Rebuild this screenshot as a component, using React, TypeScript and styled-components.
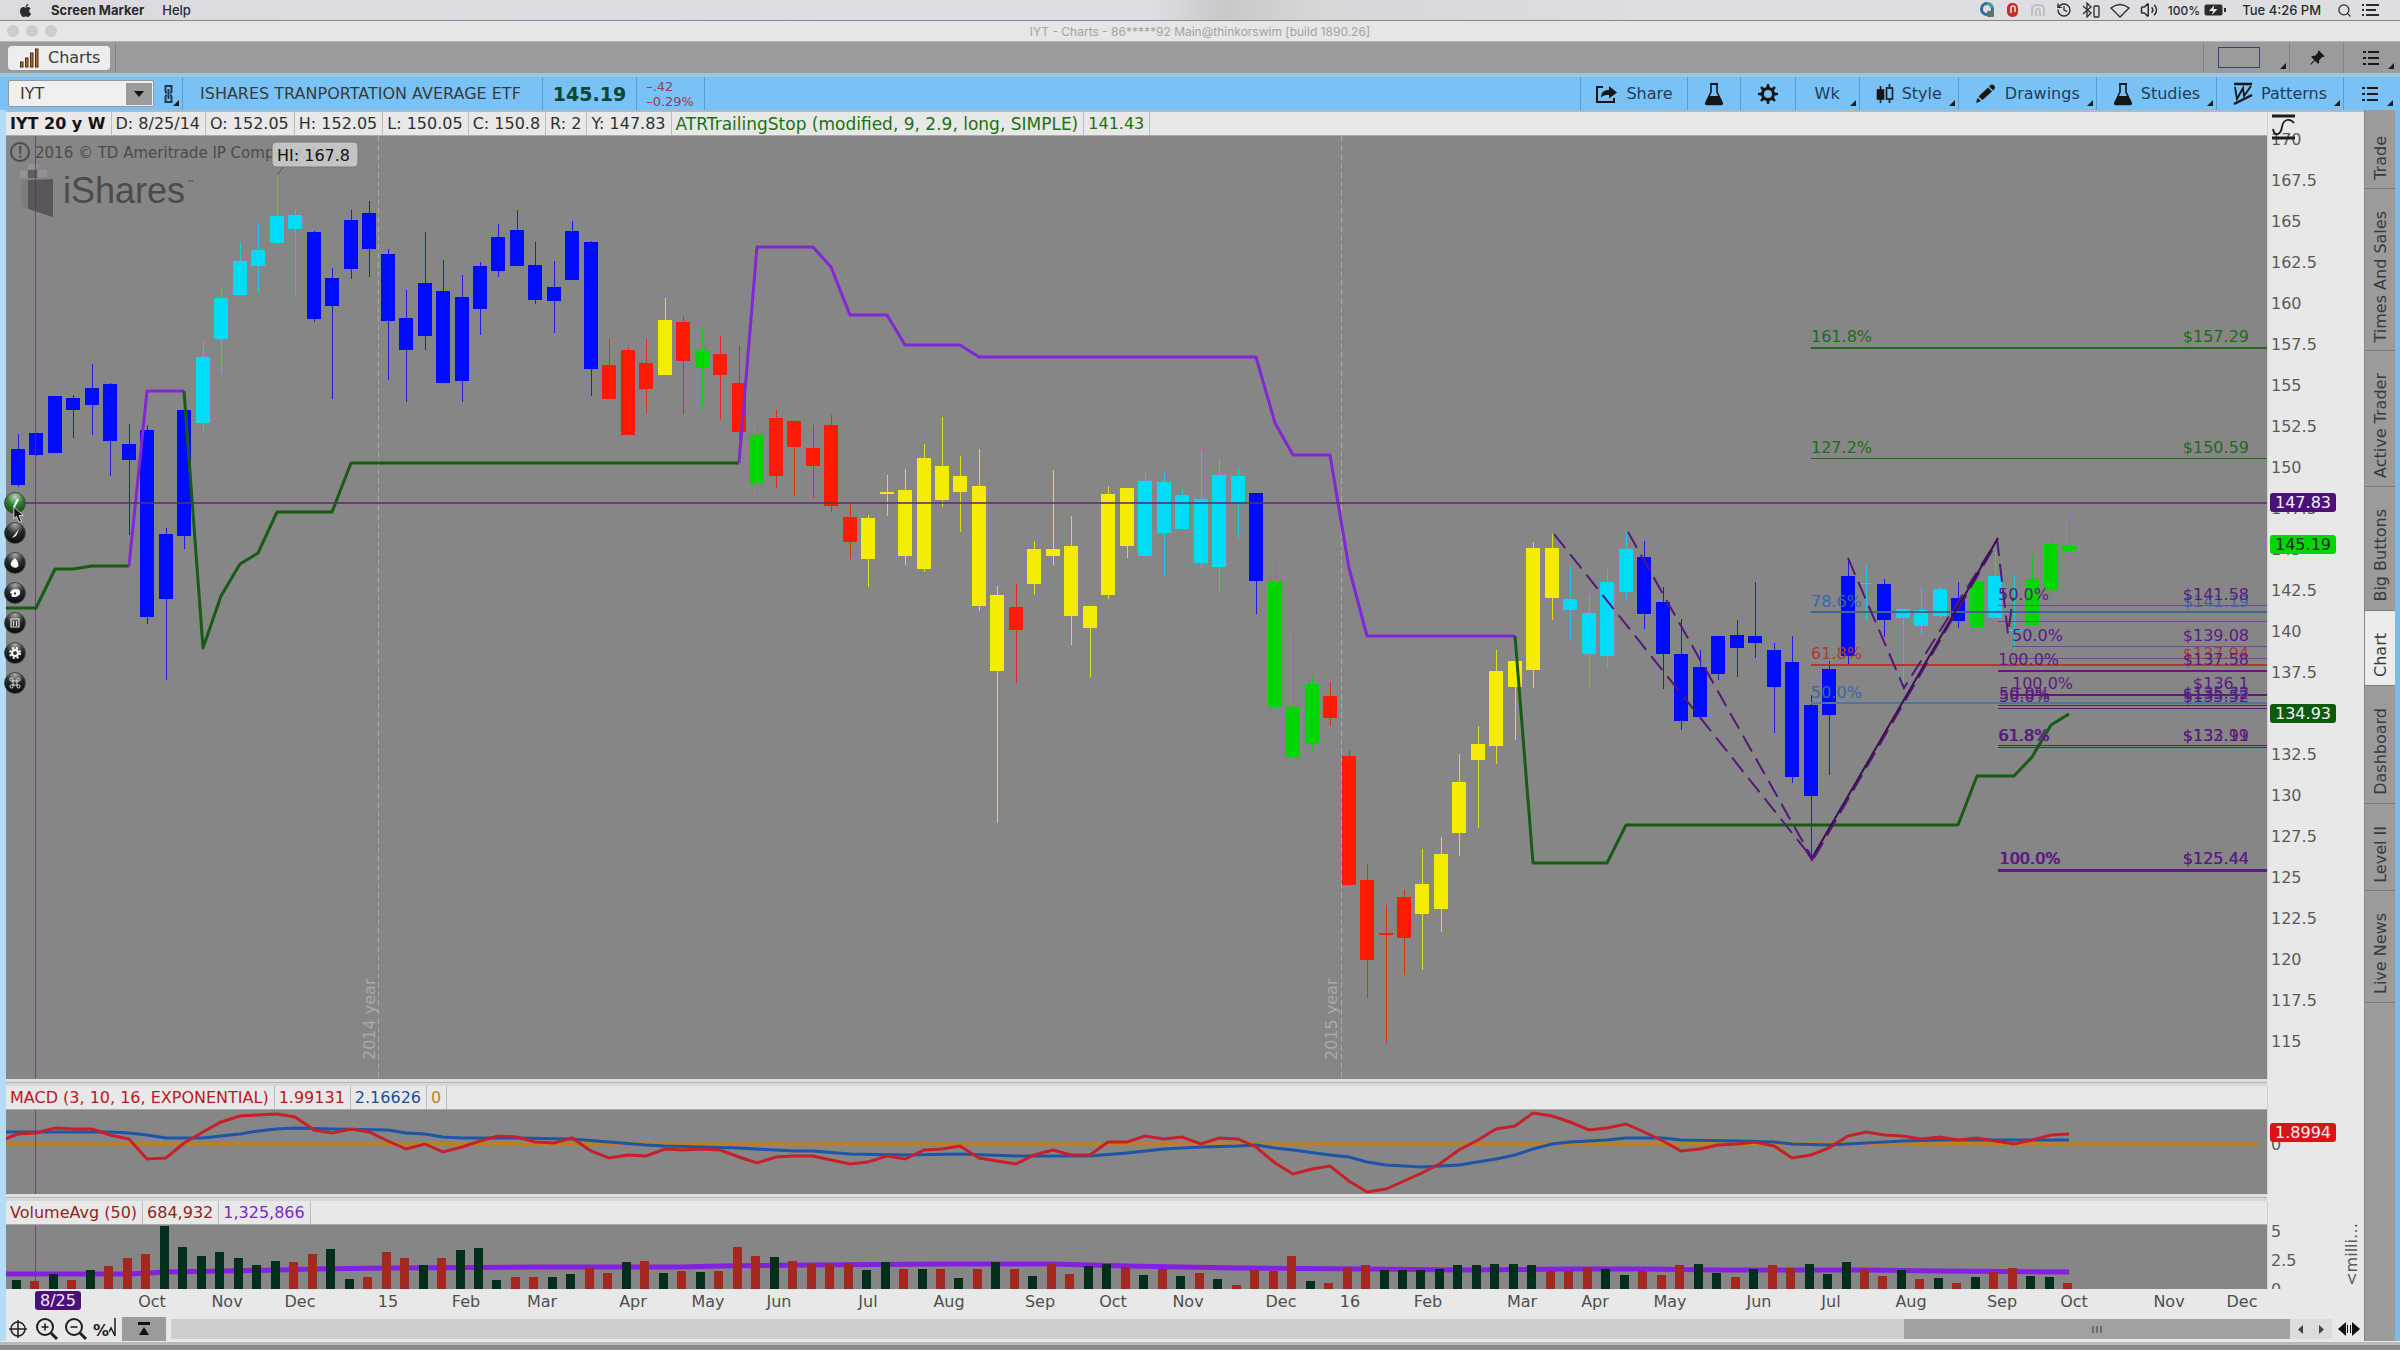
import React from "react";
import styled, { createGlobalStyle, css } from "styled-components";
import { History, Volume2, Search } from "lucide-react";
import { FaApple } from "react-icons/fa";
import { BsPinAngleFill } from "react-icons/bs";

const sans = '"DejaVu Sans", "Noto Sans", sans-serif';
const system = 'Inter, "Liberation Sans", sans-serif';

const color = {
  paper: "#e8e8e8",
  plot: "#868686",
  chrome: "#9b9b9b",
  blue: "#78c2f7",
  text: "#3a3a3a",
  candle: { b: "#000cff", c: "#00dcf5", r: "#ff1a00", y: "#f5ec00", g: "#00d600" } as Record<string, string>,
  atrUp: "#165c12",
  atrDown: "#8226d8",
  cross: "#5b2f73",
};

const Global = createGlobalStyle`
  * { box-sizing: border-box; }
  body { margin: 0; background: #8a8a8a; font-family: ${sans}; font-size: 16px; color: ${color.text}; }
  button, select { font: inherit; color: inherit; }
  svg { display: block; }
`;

/* ---------- data ---------- */

type Candle = [string, number, number, number, number];

// colour, high, body top, body bottom, low
const candles: Candle[] = [
  ["b", 298, 313, 349, 351], ["b", 297, 297, 319, 320], ["b", 260, 260, 317, 317], ["b", 259, 262, 274, 302],
  ["b", 228, 252, 269, 299], ["b", 247, 248, 305, 340], ["b", 288, 308, 324, 399], ["b", 289, 294, 481, 488],
  ["b", 392, 398, 463, 544], ["b", 274, 274, 400, 413], ["c", 205, 221, 287, 296], ["c", 152, 162, 203, 238],
  ["c", 106, 125, 159, 159], ["c", 88, 114, 130, 157], ["c", 39, 80, 107, 107], ["c", 73, 79, 93, 161],
  ["b", 95, 96, 183, 186], ["b", 132, 142, 170, 263], ["b", 74, 84, 133, 143], ["b", 65, 77, 113, 141],
  ["b", 113, 118, 185, 244], ["b", 154, 182, 214, 266], ["b", 96, 147, 200, 214], ["b", 124, 155, 247, 247],
  ["b", 139, 161, 245, 266], ["b", 126, 130, 173, 199], ["b", 88, 101, 135, 141], ["b", 74, 94, 130, 130],
  ["b", 106, 129, 164, 168], ["b", 125, 151, 165, 197], ["b", 85, 95, 144, 144], ["b", 105, 106, 233, 260],
  ["r", 203, 229, 263, 263], ["r", 211, 214, 299, 299], ["r", 203, 227, 253, 277], ["y", 162, 184, 239, 239],
  ["r", 180, 186, 225, 278], ["g", 191, 214, 232, 274], ["r", 200, 218, 239, 284], ["r", 210, 247, 296, 304],
  ["g", 288, 299, 347, 359], ["r", 274, 282, 340, 352], ["r", 284, 285, 311, 360], ["r", 289, 312, 330, 362],
  ["r", 279, 289, 370, 376], ["r", 368, 381, 406, 423], ["y", 379, 382, 423, 451], ["y", 339, 356, 358, 380],
  ["y", 333, 354, 420, 429], ["y", 308, 322, 433, 436], ["y", 281, 330, 364, 371], ["y", 320, 340, 356, 396],
  ["y", 313, 350, 470, 475], ["y", 450, 459, 535, 687], ["r", 448, 471, 494, 547], ["y", 405, 413, 448, 459],
  ["y", 334, 413, 420, 429], ["y", 380, 410, 480, 509], ["y", 470, 470, 492, 541], ["y", 350, 358, 459, 463],
  ["y", 352, 352, 410, 422], ["c", 336, 345, 420, 420], ["c", 337, 346, 397, 440], ["c", 353, 359, 393, 393],
  ["c", 314, 363, 427, 432], ["c", 322, 339, 431, 456], ["c", 331, 340, 367, 402], ["b", 357, 357, 445, 478],
  ["g", 425, 445, 571, 571], ["g", 496, 571, 621, 621], ["g", 539, 548, 608, 615], ["r", 546, 560, 582, 590],
  ["r", 614, 620, 749, 749], ["r", 728, 744, 824, 862], ["r", 769, 797, 799, 907], ["r", 754, 761, 802, 839],
  ["y", 713, 748, 778, 834], ["y", 701, 718, 773, 796], ["y", 618, 646, 697, 720], ["y", 590, 608, 624, 692],
  ["y", 514, 535, 610, 628], ["y", 520, 525, 551, 604], ["y", 406, 412, 534, 552], ["y", 398, 412, 462, 484],
  ["c", 429, 463, 474, 504], ["c", 458, 477, 518, 552], ["c", 433, 446, 520, 531], ["c", 396, 413, 456, 464],
  ["b", 405, 421, 478, 493], ["b", 451, 466, 518, 553], ["b", 483, 518, 585, 594], ["b", 514, 531, 581, 581],
  ["b", 500, 500, 538, 544], ["b", 484, 499, 512, 541], ["b", 446, 500, 507, 522], ["b", 507, 514, 551, 597],
  ["b", 500, 526, 641, 647], ["b", 559, 569, 660, 721], ["b", 525, 533, 579, 639], ["b", 423, 440, 520, 529],
  ["c", 429, 447, 448, 484], ["b", 443, 448, 484, 501], ["c", 472, 473, 482, 547], ["c", 451, 474, 490, 498],
  ["c", 449, 453, 480, 482], ["b", 446, 462, 485, 492], ["g", 443, 446, 491, 491], ["c", 415, 440, 482, 482],
  ["c", 439, 493, 495, 514], ["g", 418, 443, 489, 489], ["g", 400, 408, 454, 466], ["g", 378, 409, 415, 422],
];

const slotX = (i: number) => Math.round(12 + 18.48 * i);
const trace = (pts: number[][], y: (v: number) => number = (v) => v) =>
  pts.map(([i, v]) => `${slotX(i)},${y(v)}`).join(" ");

const trailing: [string, number[][]][] = [
  [color.atrUp, [[-1, 472], [1, 472], [2, 433], [3, 433], [4, 430], [6, 430]]],
  [color.atrDown, [[6, 430], [7, 255], [9, 255]]],
  [color.atrUp, [[9, 255], [10, 512], [11, 460], [12, 428], [13, 417], [14, 376], [17, 376], [18, 327], [39, 327]]],
  [color.atrDown, [[39, 327], [40, 111], [43, 111], [44, 131], [45, 179], [47, 179], [48, 209], [51, 209], [52, 221],
    [67, 221], [68, 287], [69, 319], [71, 319], [72, 432], [73, 500], [81, 500]]],
  [color.atrUp, [[81, 500], [82, 727], [86, 727], [87, 689], [105, 689], [106, 640], [108, 640], [109, 621], [110, 589], [111, 578]]],
];

const macd = [
  222, 220, 205, 206, 206, 225, 236, 297, 293, 250, 215, 185, 168, 165, 162, 172, 210, 218, 206, 215, 243, 266, 252,
  277, 262, 242, 227, 232, 246, 250, 233, 272, 295, 284, 289, 266, 269, 267, 269, 290, 309, 292, 289, 287, 299, 311,
  306, 289, 297, 269, 266, 258, 293, 303, 311, 286, 271, 285, 285, 246, 246, 227, 237, 232, 252, 233, 236, 262, 309,
  343, 326, 319, 362, 397, 387, 364, 340, 310, 270, 240, 207, 197, 158, 167, 185, 210, 205, 192, 217, 244, 272, 267,
  256, 252, 247, 258, 295, 285, 265, 228, 215, 225, 229, 238, 230, 241, 233, 243, 253, 240, 225, 221,
];

const signal = [
  [-1, 217], [3, 215], [5, 215], [6, 218], [7, 226], [8, 235], [10, 235], [11, 228], [12, 223], [13, 214], [14, 207],
  [15, 205], [17, 206], [20, 210], [21, 218], [22, 221], [23, 230], [24, 233], [27, 235], [30, 236], [32, 245],
  [34, 254], [35, 257], [37, 260], [39, 264], [40, 268], [42, 273], [43, 273], [45, 283], [48, 286], [51, 281],
  [54, 287], [58, 287], [60, 279], [62, 267], [64, 262], [66, 257], [67, 255], [68, 263], [69, 271], [71, 284],
  [72, 292], [73, 307], [74, 314], [75, 319], [76, 321], [78, 316], [80, 298], [81, 286], [82, 268], [83, 252],
  [84, 245], [85, 242], [86, 240], [87, 233], [89, 233], [90, 239], [93, 243], [95, 246], [96, 252], [98, 256],
  [100, 250], [102, 243], [104, 241], [111, 239],
];

const volume =
  "g661 r664 g642 r661 g630 r619 r595 r583 g499 g560 g589 g577 g594 g616 g602 r605 r581 g567 g656 r651 r577 r595 g616 r595 g570 g563 g660 r651 r651 g651 g643 r624 r640 g605 r602 g639 r634 g637 r634 r560 r588 g592 r603 r612 r612 r609 g630 g607 r628 g626 r626 g653 r626 g607 r628 g648 r611 r642 g618 g611 r620 g645 r628 g648 r639 g657 r675 r630 r634 r588 g664 r668 r622 r616 g630 g630 g630 g628 g614 g616 g612 g612 g616 r633 r632 r620 g626 g645 r633 r645 r615 g612 g640 r651 g628 r615 r623 g612 g643 g606 r627 r648 g629 r657 g653 r668 g651 r636 r624 g648 g651 r668"
    .split(" ")
    .map((s) => ({ up: s[0] === "g", v: Number(s.slice(1)) }));

const volumeAvg = [
  [-1, 643], [5, 643], [6, 641], [8, 637], [11, 633], [14, 630], [16, 626], [20, 623], [28, 621], [36, 620], [38, 618],
  [43, 616], [50, 611], [56, 611], [60, 617], [66, 623], [73, 628], [78, 629], [84, 626], [88, 626], [92, 629],
  [100, 629], [104, 632], [111, 635],
];

const months: [string, number][] = [
  ["Oct", 146], ["Nov", 221], ["Dec", 294], ["15", 382], ["Feb", 460], ["Mar", 536], ["Apr", 627], ["May", 702],
  ["Jun", 773], ["Jul", 862], ["Aug", 943], ["Sep", 1034], ["Oct", 1107], ["Nov", 1182], ["Dec", 1275], ["16", 1344],
  ["Feb", 1422], ["Mar", 1516], ["Apr", 1589], ["May", 1664], ["Jun", 1753], ["Jul", 1825], ["Aug", 1905],
  ["Sep", 1996], ["Oct", 2068], ["Nov", 2163], ["Dec", 2236],
];

const prices = Array.from({ length: 23 }, (_, i) => String(170 - i * 2.5));

type Level = { y: number; x: number; c: string; w: number };
const green = "#1f6b1c";
const violet = "#5c1a82";
const lilac = "#74459a";
const azure = "#3a66a8";
const brick = "#b03a30";

const levels: Level[] = [
  { y: 212, x: 1805, c: green, w: 2 }, { y: 322, x: 1805, c: green, w: 1 },
  { y: 476, x: 1805, c: "#3f6690", w: 2 }, { y: 529, x: 1805, c: brick, w: 2 }, { y: 567, x: 1805, c: "#4f74a4", w: 2 },
  { y: 469, x: 1992, c: lilac, w: 1 }, { y: 485, x: 1992, c: lilac, w: 1 }, { y: 510, x: 2006, c: lilac, w: 1 },
  { y: 522, x: 2006, c: lilac, w: 1 }, { y: 535, x: 1992, c: violet, w: 2 }, { y: 559, x: 2006, c: violet, w: 2 },
  { y: 569, x: 1992, c: violet, w: 1 }, { y: 572, x: 1992, c: violet, w: 1 }, { y: 609, x: 1992, c: violet, w: 1 },
  { y: 611, x: 1992, c: violet, w: 1 }, { y: 734, x: 1992, c: violet, w: 3 },
];

// label, price, x, baseline, colour
const levelTexts: [string, string, number, number, string][] = [
  ["161.8%", "$157.29", 1805, 206, green], ["127.2%", "$150.59", 1805, 317, green],
  ["78.6%", "$141.19", 1805, 471, azure], ["61.8%", "$137.94", 1805, 523, brick], ["50.0%", "$135.48", 1805, 562, azure],
  ["50.0%", "$141.58", 1992, 464, violet], ["50.0%", "$139.08", 2006, 505, violet],
  ["100.0%", "$137.58", 1992, 529, violet], ["100.0%", "$136.1", 2006, 553, violet],
  ["50.0%", "$135.52", 1993, 566, violet], ["50.0%", "$135.32", 1993, 563, violet],
  ["61.8%", "$133.11", 1992, 605, violet], ["61.8%", "$132.99", 1993, 605, violet],
  ["100.0%", "$125.44", 1993, 728, violet], ["100.0%", "$125.44", 1994, 728, violet],
];

const tabs = ["Trade", "Times And Sales", "Active Trader", "Big Buttons", "Chart", "Dashboard", "Level II", "Live News"];

/* ---------- layout ---------- */

const Desktop = styled.div`
  min-height: 100vh;
  display: flex;
  flex-direction: column;
`;

const MenuBar = styled.header`
  height: 20px;
  display: flex;
  align-items: center;
  gap: 18px;
  padding: 0 20px 0 18px;
  background: linear-gradient(90deg, #d9dbdf 0%, #dcdee3 48%, #c6c8ca 51%, #d6d7d9 55%, #dddee1 70%);
  font: 500 13px ${system};
  color: #2b2b2b;
`;

const MenuName = styled.strong`
  font-weight: 700;
`;

const MenuStatus = styled.div`
  margin-left: auto;
  display: flex;
  align-items: center;
  gap: 10px;
`;

const BatteryGroup = styled.span`
  display: flex;
  align-items: center;
  gap: 4px;
  font-size: 12px;
`;

const Clock = styled.time`
  margin: 0 6px;
`;

const Window = styled.div`
  flex: 1;
  display: flex;
  flex-direction: column;
  margin-bottom: 5px;
  border-top: 1px solid #858885;
  border-bottom: 3px solid #b9b9b9;
  background: ${color.paper};
`;

const TitleBar = styled.div`
  height: 20px;
  display: grid;
  grid-template-columns: 1fr auto 1fr;
  align-items: center;
  padding: 0 7px;
  background: #e6e6e6;
  color: #a3a3a3;
  font: 12px ${system};
`;

const Lights = styled.div`
  display: flex;
  gap: 7px;
  & span {
    width: 12px;
    height: 12px;
    border-radius: 50%;
    background: #cdcdcd;
  }
`;

const TabStrip = styled.div`
  height: 32px;
  display: flex;
  align-items: stretch;
  padding-right: 3px;
  background: ${color.chrome};
  border-top: 1px solid #b5b5b5;
`;

const TabHolder = styled.div`
  display: flex;
  align-items: center;
  padding: 0 5px 0 8px;
  border-right: 1px solid #7f8688;
`;

const ChartsTab = styled.button`
  height: 24px;
  display: flex;
  align-items: center;
  gap: 8px;
  padding: 0 10px 0 12px;
  border: 0;
  border-radius: 4px;
  background: #ededed;
`;

const Spacer = styled.div`
  flex: 1;
`;

const corner = css`
  &::after {
    content: "";
    position: absolute;
    right: 3px;
    bottom: 4px;
    border-left: 6px solid transparent;
    border-bottom: 6px solid #1c1c1c;
  }
`;

const StripButton = styled.button<{ $menu?: boolean; $wide?: boolean }>`
  position: relative;
  display: flex;
  align-items: center;
  justify-content: ${(p) => (p.$wide ? "flex-start" : "center")};
  width: ${(p) => (p.$wide ? 86 : 54)}px;
  padding: 0 14px;
  border: 0;
  border-left: 1px solid #7f8688;
  background: none;
  ${(p) => p.$menu && corner}
`;

const Swatch = styled.span`
  width: 42px;
  height: 21px;
  border: 1px solid #2c4878;
`;

const Toolbar = styled.div`
  height: 37px;
  display: flex;
  align-items: stretch;
  padding: 0 4px 0 8px;
  border-top: 4px solid #9ec7de;
  background: ${color.blue};
`;

const Combo = styled.label`
  align-self: center;
  display: flex;
  align-items: center;
  width: 146px;
  height: 27px;
  border: 1px solid #8d9aa3;
  border-radius: 2px;
  background: #efefef;
  padding: 1px;
`;

const SymbolSelect = styled.select`
  flex: 1;
  min-width: 0;
  height: 100%;
  padding: 0 10px;
  border: 0;
  background: none;
  appearance: none;
`;

const ComboArrow = styled.span`
  width: 26px;
  height: 22px;
  display: grid;
  place-items: center;
  background: ${color.chrome};
`;

const cell = css`
  display: flex;
  align-items: center;
  border: 0;
  border-left: 1px solid #5f9dc9;
`;

const LinkButton = styled.button`
  position: relative;
  display: flex;
  align-items: center;
  width: 28px;
  padding: 0 0 0 10px;
  border: 0;
  background: none;
  ${corner}
`;

const NameCell = styled.div`
  ${cell}
  padding: 0 21px 0 17px;
`;

const PriceCell = styled.div`
  ${cell}
  padding: 0 10px;
  font-size: 19px;
  font-weight: 700;
  color: #0b4733;
`;

const ChangeCell = styled.div`
  ${cell}
  flex: 1;
  font-size: 13px;
  line-height: 15px;
  color: #a03a52;
  & > div {
    align-self: stretch;
    display: flex;
    flex-direction: column;
    justify-content: center;
    padding: 0 10px 0 9px;
    border-right: 1px solid #5f9dc9;
  }
`;

const ToolButton = styled.button<{ $menu?: boolean; $pad?: number }>`
  ${cell}
  position: relative;
  gap: 8px;
  padding: 0 ${(p) => p.$pad ?? 16}px;
  background: none;
  color: #1f3d56;
  & svg {
    color: #161616;
  }
  ${(p) => p.$menu && corner}
`;

const Body = styled.main`
  display: flex;
  align-items: stretch;
  border-left: 6px solid #b4dcf5;
  border-right: 5px solid #7dbbe2;
`;

const Panes = styled.div`
  flex: 1;
  min-width: 0;
  border-top: 2px solid #b4b9bb;
`;

const Pane = styled.section`
  display: flex;
`;

const PaneMain = styled.div`
  flex: 1;
  min-width: 0;
  border-right: 1px solid #d0d0d0;
`;

const PaneHeader = styled.div`
  height: 24px;
  display: flex;
  align-items: stretch;
  white-space: nowrap;
  background: ${color.paper};
  border-bottom: 1px solid #a9a9a9;
`;

const Reading = styled.span<{ $color?: string; $bold?: boolean; $study?: boolean }>`
  display: flex;
  align-items: center;
  padding: 0 5px 0 4px;
  border-right: 1px solid #bdbdbd;
  color: ${(p) => p.$color ?? "#303030"};
  font-size: ${(p) => (p.$study ? 17 : 16)}px;
  font-weight: ${(p) => (p.$bold ? 700 : 400)};
`;

const Plot = styled.div<{ $h: number }>`
  position: relative;
  height: ${(p) => p.$h}px;
  background: ${color.plot};
`;

const Canvas = styled.svg`
  width: 100%;
  height: 100%;
`;

const Splitter = styled.div`
  height: 7px;
  margin-right: 97px;
  border-top: 3px solid #dedede;
  border-bottom: 3px solid #d4d8d8;
  background: #b3b6b6;
`;

const Axis = styled.div`
  position: relative;
  width: 96px;
  overflow: hidden;
  padding-left: 3px;
  color: #5a5a5a;
`;

const PriceScale = styled.ol`
  list-style: none;
  margin: 0;
  padding: 7px 0 0;
  & li {
    height: 41px;
    line-height: 41px;
  }
`;

const MacdScale = styled(PriceScale)`
  padding-top: 38px;
`;

const ScaleTool = styled.button`
  position: absolute;
  left: 4px;
  top: 2px;
  padding: 0;
  border: 0;
  background: none;
  color: #1c1c1c;
`;

const PriceTag = styled.output<{ $top: number; $bg: string; $fg?: string }>`
  position: absolute;
  left: 2px;
  top: ${(p) => p.$top}px;
  padding: 0 5px;
  height: 19px;
  line-height: 19px;
  border-radius: 3px;
  background: ${(p) => p.$bg};
  color: ${(p) => p.$fg ?? "#f2eef6"};
`;

const VolumeScale = styled.div`
  height: 88px;
  display: flex;
  flex-direction: column;
  padding-top: 16px;
  line-height: 29px;
`;

const Units = styled.span`
  position: absolute;
  right: 3px;
  bottom: 3px;
  writing-mode: vertical-rl;
  transform: rotate(180deg);
`;

const TimeAxis = styled.div`
  height: 28px;
`;

const FooterBar = styled.footer`
  display: flex;
  align-items: center;
  gap: 5px;
  height: 24px;
  padding-right: 3px;
`;

const FooterButton = styled.button`
  padding: 0;
  width: 24px;
  border: 0;
  background: none;
  color: #1f1f1f;
  font-weight: 700;
  & svg {
    margin: 0 auto;
  }
`;

const PercentButton = styled(FooterButton)`
  display: flex;
  align-items: flex-end;
  & svg {
    margin: 0;
    flex: none;
  }
`;

const ExpandButton = styled(FooterButton)`
  width: 44px;
  height: 24px;
  background: ${color.chrome};
`;

const ScrollBar = styled.div`
  flex: 1;
  height: 20px;
  display: flex;
`;

const Track = styled.div`
  flex: 1;
  display: flex;
  justify-content: flex-end;
  background: #cdcfcf;
`;

const Thumb = styled.div`
  width: 18.2%;
  display: flex;
  justify-content: center;
  align-items: center;
  gap: 2px;
  background: #a1a1a1;
  & span {
    width: 2px;
    height: 7px;
    background: #6d6d6d;
  }
`;

const Arrows = styled.div`
  display: flex;
  background: #dcdcdc;
  & button {
    width: 21px;
  }
`;

const SideTabs = styled.nav`
  width: 31px;
  display: flex;
  flex-direction: column;
  padding-top: 4px;
  border-left: 1px solid #858585;
  background: ${color.chrome};
`;

const SideTab = styled.button<{ $active?: boolean }>`
  display: flex;
  align-items: center;
  justify-content: center;
  padding: 22px 0 8px;
  border: 0;
  border-bottom: 1px solid #7d7d7d;
  background: ${(p) => (p.$active ? "#ececec" : color.chrome)};
  & span {
    writing-mode: vertical-rl;
    transform: rotate(180deg);
  }
`;

const Palette = styled.div`
  position: absolute;
  left: -2px;
  top: 356px;
  display: flex;
  flex-direction: column;
  gap: 8px;
`;

const PaletteButton = styled.button<{ $on?: boolean }>`
  width: 22px;
  height: 22px;
  padding: 0;
  display: grid;
  place-items: center;
  border: 1px solid #4a4a4a;
  border-radius: 50%;
  background: ${(p) =>
    p.$on
      ? "radial-gradient(circle at 50% 20%, #b9d6b9 0, #2f7a2f 45%, #0d3c0d 100%)"
      : "radial-gradient(circle at 50% 8%, #a8a8a8 0, #2a2a2a 45%, #000 100%)"};
`;

const Pointer = styled.svg`
  position: absolute;
  left: 7px;
  top: 370px;
  width: 12px;
  height: 18px;
`;

/* ---------- drawings ---------- */

const Flask = () => (
  <svg width="20" height="24" viewBox="0 0 20 24" fill="none" stroke="currentColor" strokeWidth="2">
    <path d="M6 2h8" />
    <path d="M7 2v8L1.800 21q-.4 1.500 1.200 1.500h14q1.600 0 1.200-1.500L13 10V2" strokeWidth="1.600" />
    <path d="M5 14h10l4 7.500q0 1-1.500 1h-15q-1.500 0-1.500-1z" fill="currentColor" stroke="none" />
  </svg>
);

const Gear = () => (
  <svg width="22" height="22" viewBox="0 0 22 22" fill="none" stroke="currentColor">
    <circle cx="11" cy="11" r="5.500" strokeWidth="3" />
    {[0, 45, 90, 135, 180, 225, 270, 315].map((a) => (
      <path key={a} d="M9.200 5L10 1h2L12.800 5z" fill="currentColor" stroke="none" transform={`rotate(${a} 11 11)`} />
    ))}
  </svg>
);

const ShareArrow = () => (
  <svg width="23" height="20" viewBox="0 0 23 20" fill="none" stroke="currentColor" strokeWidth="2">
    <path d="M8 3H2v15h17v-4" />
    <path d="M6 14c0-6 3-8 8-8V2l8 6.500-8 6V11c-4 0-6 0-8 3z" fill="currentColor" stroke="none" />
  </svg>
);

const StyleIcon = () => (
  <svg width="18" height="20" viewBox="0 0 18 20" fill="none" stroke="currentColor" strokeWidth="1.600">
    <path d="M4.500 2v17M13.500 0v4M13.500 15v4" />
    <rect x="1.500" y="6" width="6" height="9" fill="currentColor" />
    <rect x="10.500" y="4" width="6" height="11" />
  </svg>
);

const Pencil = () => (
  <svg width="22" height="20" viewBox="0 0 22 20" fill="currentColor">
    <path d="M15 1.500q2-2 4 0t0 4l-1 1-4-4z" />
    <path d="M13 3.500l4 4L7.500 16 3.500 12.500z" />
    <path d="M2.500 14l3.500 3L1 19z" />
  </svg>
);

const PatternIcon = () => (
  <svg width="20" height="24" viewBox="0 0 20 24" fill="none" stroke="currentColor">
    <path d="M1 2h18M1 22L19 13" strokeWidth="2.500" />
    <path d="M2 5l2 12 6-11 1 8 7-10" strokeWidth="1.800" />
  </svg>
);

const Bullets = () => (
  <svg width="18" height="16" viewBox="0 0 18 16" fill="#1a1a1a">
    {[1, 7, 13].map((y) => (
      <g key={y}>
        <rect x="1" y={y} width="3" height="2" />
        <rect x="6" y={y} width="11" height="2" />
      </g>
    ))}
  </svg>
);

const ChartsIcon = () => (
  <svg width="20" height="20" viewBox="0 0 20 20" fill="#a86b2e" stroke="#4d2f10">
    <rect x="0.500" y="14" width="2.500" height="5" />
    <rect x="5.500" y="10" width="2.500" height="9" />
    <rect x="10.500" y="5" width="2.500" height="14" />
    <rect x="15.500" y="1" width="2.500" height="18" />
  </svg>
);

const ChainIcon = () => (
  <svg width="9" height="20" viewBox="0 0 9 20" fill="none" stroke="#1d3c55" strokeWidth="2">
    <path d="M1.500 8V2h6v6M1.500 12v6h6v-6M1 8.500h2M6 8.500h2M1 11.500h2M6 11.500h2M4.500 5v10" />
  </svg>
);

const Magnifier = ({ minus }: { minus?: boolean }) => (
  <svg width="24" height="24" viewBox="0 0 24 24" fill="none" stroke="currentColor" strokeWidth="2">
    <circle cx="10" cy="10" r="8" />
    <path d="M16 16l6 6" strokeWidth="3" />
    <path d={minus ? "M6.500 10h7" : "M6.500 10h7M10 6.500v7"} strokeWidth="1.600" />
  </svg>
);

const MenuGlyphs = () => (
  <>
    <svg width="17" height="16" viewBox="0 0 17 16">
      <circle cx="8" cy="7" r="5.500" fill="none" stroke="#2b6ca6" strokeWidth="3" />
      <path d="M8 1.500a5.500 5.500 0 0 1 5 4" fill="none" stroke="#4fa37a" strokeWidth="3" />
      <rect x="8" y="9" width="7" height="6" rx="1" fill="#5c7568" />
    </svg>
    <svg width="14" height="16" viewBox="0 0 14 16">
      <rect x="1" y="1" width="11" height="14" rx="5" fill="#c22f2c" />
      <path d="M5 11V6q0-2 2-2t2 2v4" fill="none" stroke="#f2dcdc" strokeWidth="1.500" />
    </svg>
    <svg width="16" height="14" viewBox="0 0 16 14" fill="none" stroke="#c0c0c4" strokeWidth="2">
      <path d="M2 13V6q0-4 6-4t6 4v7M6 13V8q0-2 2-2t2 2v5" />
    </svg>
    <History size={16} />
    <svg width="18" height="16" viewBox="0 0 18 16" fill="none" stroke="currentColor" strokeWidth="1.300">
      <path d="M1 4l8 7-4 4V1l4 4-8 7" />
      <rect x="12" y="4" width="5" height="11" rx="1" />
    </svg>
    <svg width="20" height="15" viewBox="0 0 20 15" fill="none" stroke="currentColor" strokeWidth="1.300">
      <path d="M10 14L1 5q9-7 18 0z" />
    </svg>
    <Volume2 size={18} />
  </>
);

const paletteGlyphs = [
  <path key="p" d="M10 3l-4 8" stroke="#fff" strokeWidth="2" />,
  <path key="b" d="M11 3L4 12l4-2z" fill="#fff" />,
  <path key="d" d="M7 2q5 6 3 8.500t-6 0T7 2z" fill="#fff" />,
  <path key="e" d="M2 7q1-4 6-4t4 5q-2 3-6 3t-2-3z M6 6.500h2v2H6z" fill="#fff" fillRule="evenodd" />,
  <path key="t" d="M3 3h8v8H3zM5.500 5v5M8.500 5v5" stroke="#e4e4e4" fill="none" strokeWidth="1.200" />,
  <g key="g" stroke="#fff" fill="none"><circle cx="7" cy="7" r="3" strokeWidth="2" /><circle cx="7" cy="7" r="5" strokeWidth="2" strokeDasharray="2 2" /></g>,
  <path key="c" d="M5 5V3.500A1.500 1.500 0 1 0 3.500 5h7A1.500 1.500 0 1 0 9 3.500v7A1.500 1.500 0 1 0 10.500 9h-7A1.500 1.500 0 1 0 5 10.500z" stroke="#ddd" fill="none" />,
];
const paletteNames = ["Pen", "Brush", "Colour", "Eraser", "Clear", "Settings", "Shortcuts"];

function PricePlot() {
  return (
    <Canvas fontSize="16" fontFamily={sans}>
      <g fill="#4b4b4b">
        <circle cx="14" cy="16" r="9" fill="none" stroke="#4b4b4b" strokeWidth="2" />
        <path d="M13 10h2.500l-.5 8h-1.500zM13 19.500h2.500v2H13z" />
        <text x="29" y="22" fontSize="15">2016 © TD Ameritrade IP Company, Inc.</text>
        <path d="M22 44l25-1v38l-25-8z" fill="#5a5759" />
        <path d="M15 44h7v29l-7-3z" fill="#7d7d7d" />
        <path d="M22 34h9v8h-9z" fill="#5f5f5f" />
        <path d="M22 28h10v5H22zM32 34h9v7h-9zM14 35h7v7h-7z" fill="#939393" />
        <text x="57" y="67" fontSize="36" fontFamily='"Liberation Sans", Arial, sans-serif'>iShares</text>
        <text x="181" y="50" fontSize="8">™</text>
      </g>
      <g stroke="#a6a6a6" strokeDasharray="6 3">
        <path d="M372.500 0V943M1335.500 0V943" />
      </g>
      <g fill="#a9a9a9">
        <text transform="translate(369 924) rotate(-90)">2014 year</text>
        <text transform="translate(1331 924) rotate(-90)">2015 year</text>
      </g>

      {candles.map(([c, high, top, bottom, low], i) => (
        <g key={i} fill={color.candle[c]}>
          <rect x={slotX(i)} y={high} width="1" height={low - high} opacity="0.85" />
          <rect x={slotX(i) - 7} y={top} width="14" height={bottom - top} />
        </g>
      ))}

      {trailing.map(([c, pts], i) => (
        <polyline key={i} points={trace(pts)} fill="none" stroke={c} strokeWidth="3" strokeLinejoin="round" />
      ))}

      {levels.map((l, i) => (
        <line key={i} x1={l.x} x2="100%" y1={l.y} y2={l.y} stroke={l.c} strokeWidth={l.w} shapeRendering="crispEdges" />
      ))}
      {levelTexts.map(([label, price, x, y, c], i) => (
        <g key={i} fill={c}>
          <text x={x} y={y}>{label}</text>
          <text x="100%" dx="-18" y={y} textAnchor="end">{price}</text>
        </g>
      ))}

      <g fill="none" stroke="#54187c" strokeWidth="2">
        <g strokeDasharray="18 8">
          <path d="M1548 398L1806 722M1622 396L1806 722" />
          <path d="M1842 422L1898 552L1991 404" />
          <path d="M1991 402L2002 498L2007 462" />
          <path d="M1808 722L1991 406" />
        </g>
        <path d="M1806 722L1992 402" stroke="#3a1050" />
        <path d="M1801 716l5 8 5-8" />
      </g>

      <g stroke={color.cross}>
        <path d="M29.500 0V943" strokeWidth="1" opacity="0.7" />
        <line x1="0" x2="100%" y1="367" y2="367" strokeWidth="2" opacity="0.8" />
      </g>

      <g>
        <path d="M271 39l7-9" stroke="#555" />
        <rect x="266" y="6" width="86" height="25" rx="4" fill="#d6d6d6" fillOpacity="0.78" stroke="#777" />
        <text x="271" y="25" fill="#111">HI: 167.8</text>
      </g>
    </Canvas>
  );
}

const macdY = (v: number) => Math.round(v / 3) - 50;
const volumeY = (v: number) => Math.round(v / 3) - 165;

export default function App() {
  return (
    <Desktop>
      <Global />
      <MenuBar>
        <FaApple size={15} />
        <MenuName>Screen Marker</MenuName>
        <span>Help</span>
        <MenuStatus>
          <MenuGlyphs />
          <BatteryGroup>
            100%
            <svg width="22" height="12" viewBox="0 0 22 12">
              <rect x="0.500" y="0.500" width="18" height="11" rx="2" fill="#2b2b2b" />
              <rect x="20" y="4" width="2" height="4" fill="#2b2b2b" />
              <path d="M10.500 1L5 7h4l-1 4 5.500-6h-4z" fill="#e8e8ea" />
            </svg>
          </BatteryGroup>
          <Clock>Tue 4:26 PM</Clock>
          <Search size={15} />
          <svg width="18" height="14" viewBox="0 0 18 14" fill="currentColor">
            <path d="M0 1h2v2H0zM4 1h13v2H4zM0 6h2v2H0zM4 6h10v2H4zM0 11h2v2H0zM4 11h13v2H4z" />
          </svg>
        </MenuStatus>
      </MenuBar>

      <Window>
        <TitleBar>
          <Lights><span /><span /><span /></Lights>
          <span>IYT - Charts - 86*****92 Main@thinkorswim [build 1890.26]</span>
        </TitleBar>

        <TabStrip>
          <TabHolder>
            <ChartsTab><ChartsIcon />Charts</ChartsTab>
          </TabHolder>
          <Spacer />
          <StripButton $wide $menu aria-label="Layout"><Swatch /></StripButton>
          <StripButton aria-label="Pin"><BsPinAngleFill size={16} color="#1a1a1a" /></StripButton>
          <StripButton $menu aria-label="Menu"><Bullets /></StripButton>
        </TabStrip>

        <Toolbar>
          <Combo>
            <SymbolSelect aria-label="Symbol" defaultValue="IYT"><option>IYT</option></SymbolSelect>
            <ComboArrow>
              <svg width="12" height="8" viewBox="0 0 12 8"><path d="M1 1h10L6 7z" fill="#111" /></svg>
            </ComboArrow>
          </Combo>
          <LinkButton aria-label="Link"><ChainIcon /></LinkButton>
          <NameCell>ISHARES TRANPORTATION AVERAGE ETF</NameCell>
          <PriceCell>145.19</PriceCell>
          <ChangeCell><div><span>–.42</span><span>–0.29%</span></div></ChangeCell>
          <ToolButton $pad={14}><ShareArrow />Share</ToolButton>
          <ToolButton aria-label="Edit studies"><Flask /></ToolButton>
          <ToolButton aria-label="Settings"><Gear /></ToolButton>
          <ToolButton $menu $pad={19}>Wk</ToolButton>
          <ToolButton $menu><StyleIcon />Style</ToolButton>
          <ToolButton $menu><Pencil />Drawings</ToolButton>
          <ToolButton $menu><Flask />Studies</ToolButton>
          <ToolButton $menu><PatternIcon />Patterns</ToolButton>
          <ToolButton $menu $pad={17} aria-label="More"><Bullets /></ToolButton>
        </Toolbar>

        <Body>
          <Panes>
            <Pane>
              <PaneMain>
                <PaneHeader>
                  <Reading $bold $color="#141414">IYT 20 y W</Reading>
                  <Reading>D: 8/25/14</Reading>
                  <Reading>O: 152.05</Reading>
                  <Reading>H: 152.05</Reading>
                  <Reading>L: 150.05</Reading>
                  <Reading>C: 150.8</Reading>
                  <Reading>R: 2</Reading>
                  <Reading>Y: 147.83</Reading>
                  <Reading $study $color="#1f6f14">ATRTrailingStop (modified, 9, 2.9, long, SIMPLE)</Reading>
                  <Reading $color="#1f6f14">141.43</Reading>
                </PaneHeader>
                <Plot $h={943}>
                  <PricePlot />
                  <Palette>
                    {paletteGlyphs.map((glyph, i) => (
                      <PaletteButton key={i} $on={i === 0} aria-label={paletteNames[i]}>
                        <svg width="14" height="14" viewBox="0 0 14 14">{glyph}</svg>
                      </PaletteButton>
                    ))}
                  </Palette>
                  <Pointer viewBox="0 0 14 21">
                    <path d="M1 1v14l3-3 3 7 3-1-3-7h5z" fill="#111" stroke="#eee" />
                  </Pointer>
                </Plot>
              </PaneMain>
              <Axis>
                <ScaleTool aria-label="Scale">
                  <svg width="24" height="26" viewBox="0 0 24 26" fill="none" stroke="currentColor">
                    <path d="M0 2h23M0 24h23" strokeWidth="3" />
                    <path d="M1 15q1 6 5 5 3-1 4-7t5-7q4-1 7 3" strokeWidth="1.800" />
                  </svg>
                </ScaleTool>
                <PriceScale>
                  {prices.map((p) => <li key={p}>{p}</li>)}
                </PriceScale>
                <PriceTag $bg="#4c1079" $top={381}>147.83</PriceTag>
                <PriceTag $bg="#00d600" $fg="#0b2b0b" $top={423}>145.19</PriceTag>
                <PriceTag $bg="#0c5c0c" $top={592}>134.93</PriceTag>
              </Axis>
            </Pane>
            <Splitter />
            <Pane>
              <PaneMain>
                <PaneHeader>
                  <Reading $color="#c01522">MACD (3, 10, 16, EXPONENTIAL)</Reading>
                  <Reading $color="#c01522">1.99131</Reading>
                  <Reading $color="#1b4e9b">2.16626</Reading>
                  <Reading $color="#bd8420">0</Reading>
                </PaneHeader>
                <Plot $h={84}>
                  <Canvas fill="none">
                    <line x1="0" x2="2252" y1="34" y2="34" stroke="#b9802a" strokeWidth="4" />
                    <polyline points={trace(signal, macdY)} stroke="#1f55a6" strokeWidth="3" />
                    <polyline points={trace([[-1, 242], ...macd.map((v, i) => [i, v])], macdY)} stroke="#c8202a" strokeWidth="3" />
                    <path d="M29.500 0V84" stroke={color.cross} opacity="0.7" />
                  </Canvas>
                </Plot>
              </PaneMain>
              <Axis>
                <MacdScale><li>0</li></MacdScale>
                <PriceTag $bg="#dd1216" $top={37}>1.8994</PriceTag>
              </Axis>
            </Pane>
            <Splitter />
            <Pane>
              <PaneMain>
                <PaneHeader>
                  <Reading $color="#8f2722">VolumeAvg (50)</Reading>
                  <Reading $color="#8f2722">684,932</Reading>
                  <Reading $color="#7a26cc">1,325,866</Reading>
                </PaneHeader>
                <Plot $h={64}>
                  <Canvas>
                    <path d="M29.500 0V64" stroke={color.cross} opacity="0.7" />
                    <polyline points={trace(volumeAvg, volumeY)} fill="none" stroke="#8420e0" strokeWidth="5" />
                    {volume.map(({ up, v }, i) => (
                      <rect key={i} x={slotX(i) - 6} y={volumeY(v)} width="9" height={64 - volumeY(v)} fill={up ? "#03301a" : "#a22820"} />
                    ))}
                  </Canvas>
                </Plot>
              </PaneMain>
              <Axis>
                <VolumeScale><span>5</span><span>2.5</span><span>0</span></VolumeScale>
                <Units>&lt;milli…</Units>
              </Axis>
            </Pane>
            <TimeAxis>
              <Canvas fontSize="16" fontFamily={sans} fill="#4e4e4e" textAnchor="middle">
                <rect x="29" y="2" width="46" height="19" rx="3" fill="#4c1079" />
                <text x="52" y="17" fill="#f2eef6">8/25</text>
                {months.map(([m, x]) => <text key={x} x={x} y="18">{m}</text>)}
              </Canvas>
            </TimeAxis>
            <FooterBar>
              <FooterButton aria-label="Crosshair">
                <svg width="20" height="20" viewBox="0 0 20 20" fill="none" stroke="currentColor" strokeWidth="1.500">
                  <circle cx="10" cy="10" r="7" /><path d="M10 1v18M1 10h18" />
                </svg>
              </FooterButton>
              <FooterButton aria-label="Zoom in"><Magnifier /></FooterButton>
              <FooterButton aria-label="Zoom out"><Magnifier minus /></FooterButton>
              <PercentButton>
                %
                <svg width="8" height="22" viewBox="0 0 8 22" fill="none" stroke="currentColor" strokeWidth="1.500">
                  <path d="M0 14l2-4 4 8V0" />
                </svg>
              </PercentButton>
              <ExpandButton aria-label="Expand">
                <svg width="14" height="14" viewBox="0 0 14 14" fill="#111"><path d="M1 0h12v3H1zM7 5l5 8H2z" /></svg>
              </ExpandButton>
              <ScrollBar>
                <Track><Thumb><span /><span /><span /></Thumb></Track>
                <Arrows>
                  <FooterButton aria-label="Scroll left"><svg width="5" height="9" viewBox="0 0 5 9"><path d="M5 0v9L0 4.500z" fill="#444" /></svg></FooterButton>
                  <FooterButton aria-label="Scroll right"><svg width="5" height="9" viewBox="0 0 5 9"><path d="M0 0v9l5-4.500z" fill="#444" /></svg></FooterButton>
                </Arrows>
              </ScrollBar>
              <FooterButton aria-label="Fit width">
                <svg width="22" height="14" viewBox="0 0 22 14" fill="#111"><path d="M8 0v14L0 7zM14 0v14l8-7zM9 3h1v8H9zM12 3h1v8h-1z" /></svg>
              </FooterButton>
            </FooterBar>
          </Panes>
          <SideTabs>
            {tabs.map((t) => <SideTab key={t} $active={t === "Chart"}><span>{t}</span></SideTab>)}
          </SideTabs>
        </Body>
      </Window>
    </Desktop>
  );
}
